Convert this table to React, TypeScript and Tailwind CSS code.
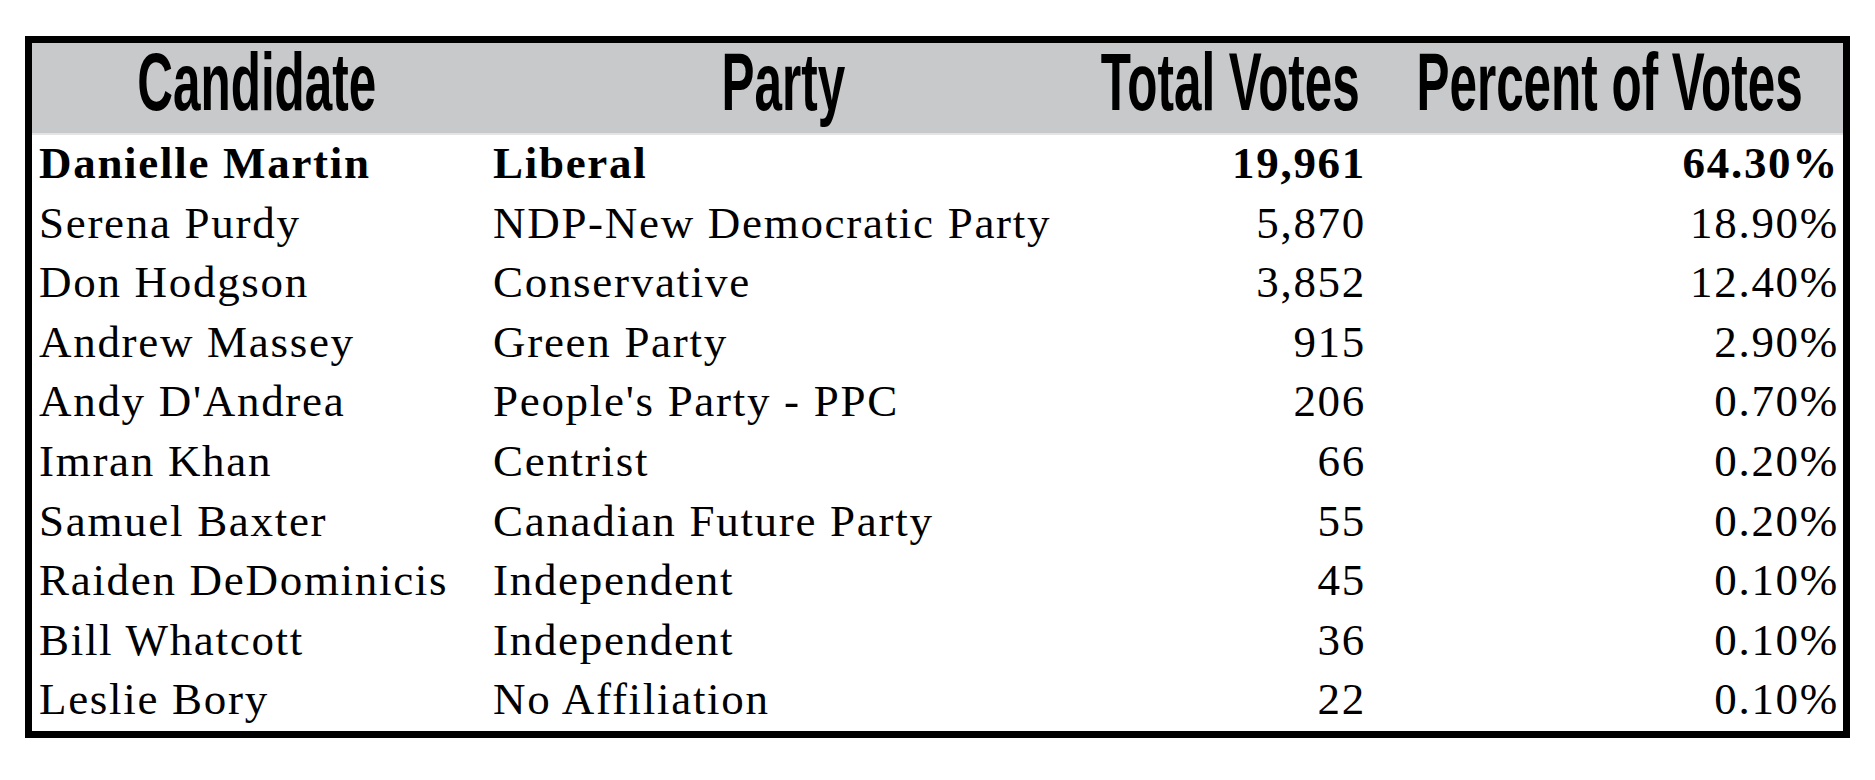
const headers = ["Candidate", "Party", "Total Votes", "Percent of Votes"];

const results = [
  { name: "Danielle Martin", party: "Liberal", votes: "19,961", pct: "64.30%", winner: true },
  { name: "Serena Purdy", party: "NDP-New Democratic Party", votes: "5,870", pct: "18.90%" },
  { name: "Don Hodgson", party: "Conservative", votes: "3,852", pct: "12.40%" },
  { name: "Andrew Massey", party: "Green Party", votes: "915", pct: "2.90%" },
  { name: "Andy D'Andrea", party: "People's Party - PPC", votes: "206", pct: "0.70%" },
  { name: "Imran Khan", party: "Centrist", votes: "66", pct: "0.20%" },
  { name: "Samuel Baxter", party: "Canadian Future Party", votes: "55", pct: "0.20%" },
  { name: "Raiden DeDominicis", party: "Independent", votes: "45", pct: "0.10%" },
  { name: "Bill Whatcott", party: "Independent", votes: "36", pct: "0.10%" },
  { name: "Leslie Bory", party: "No Affiliation", votes: "22", pct: "0.10%" },
];

export default function App() {
  return <div className="min-h-screen bg-white pl-[25px] pt-[36px]">
      <div className="w-[1825px] border-[7px] border-black bg-white text-black">
        {/* Header */}
        <div className="grid h-[90px] grid-cols-[450px_602px_292px_467px] bg-[#c8c9cb] font-['Liberation_Sans',Arial,sans-serif]">
          {headers.map(h => <div key={h} className="flex justify-center">
              <span className="inline-block shrink-0 scale-x-[0.61] whitespace-nowrap text-[81px] font-bold leading-[78px]">
                {h}
              </span>
            </div>)}
        </div>

        {/* Rows */}
        <div className="border-t-2 border-[#e4e4e4] font-['Liberation_Serif','Times_New_Roman',serif] text-[45px] tracking-[1.7px]">
          {results.map(r => <div key={r.name} className={`grid h-[59.6px] grid-cols-[450px_602px_292px_467px] whitespace-nowrap leading-[57px] ${r.winner ? "font-bold" : "font-normal"}`}>
              <div className="pl-[7px]">{r.name}</div>
              <div className="pl-[11px]">{r.party}</div>
              <div className="pr-[10px] text-right">{r.votes}</div>
              <div className="pr-[4px] text-right">{r.pct}</div>
            </div>)}
        </div>
      </div>
    </div>;
}
